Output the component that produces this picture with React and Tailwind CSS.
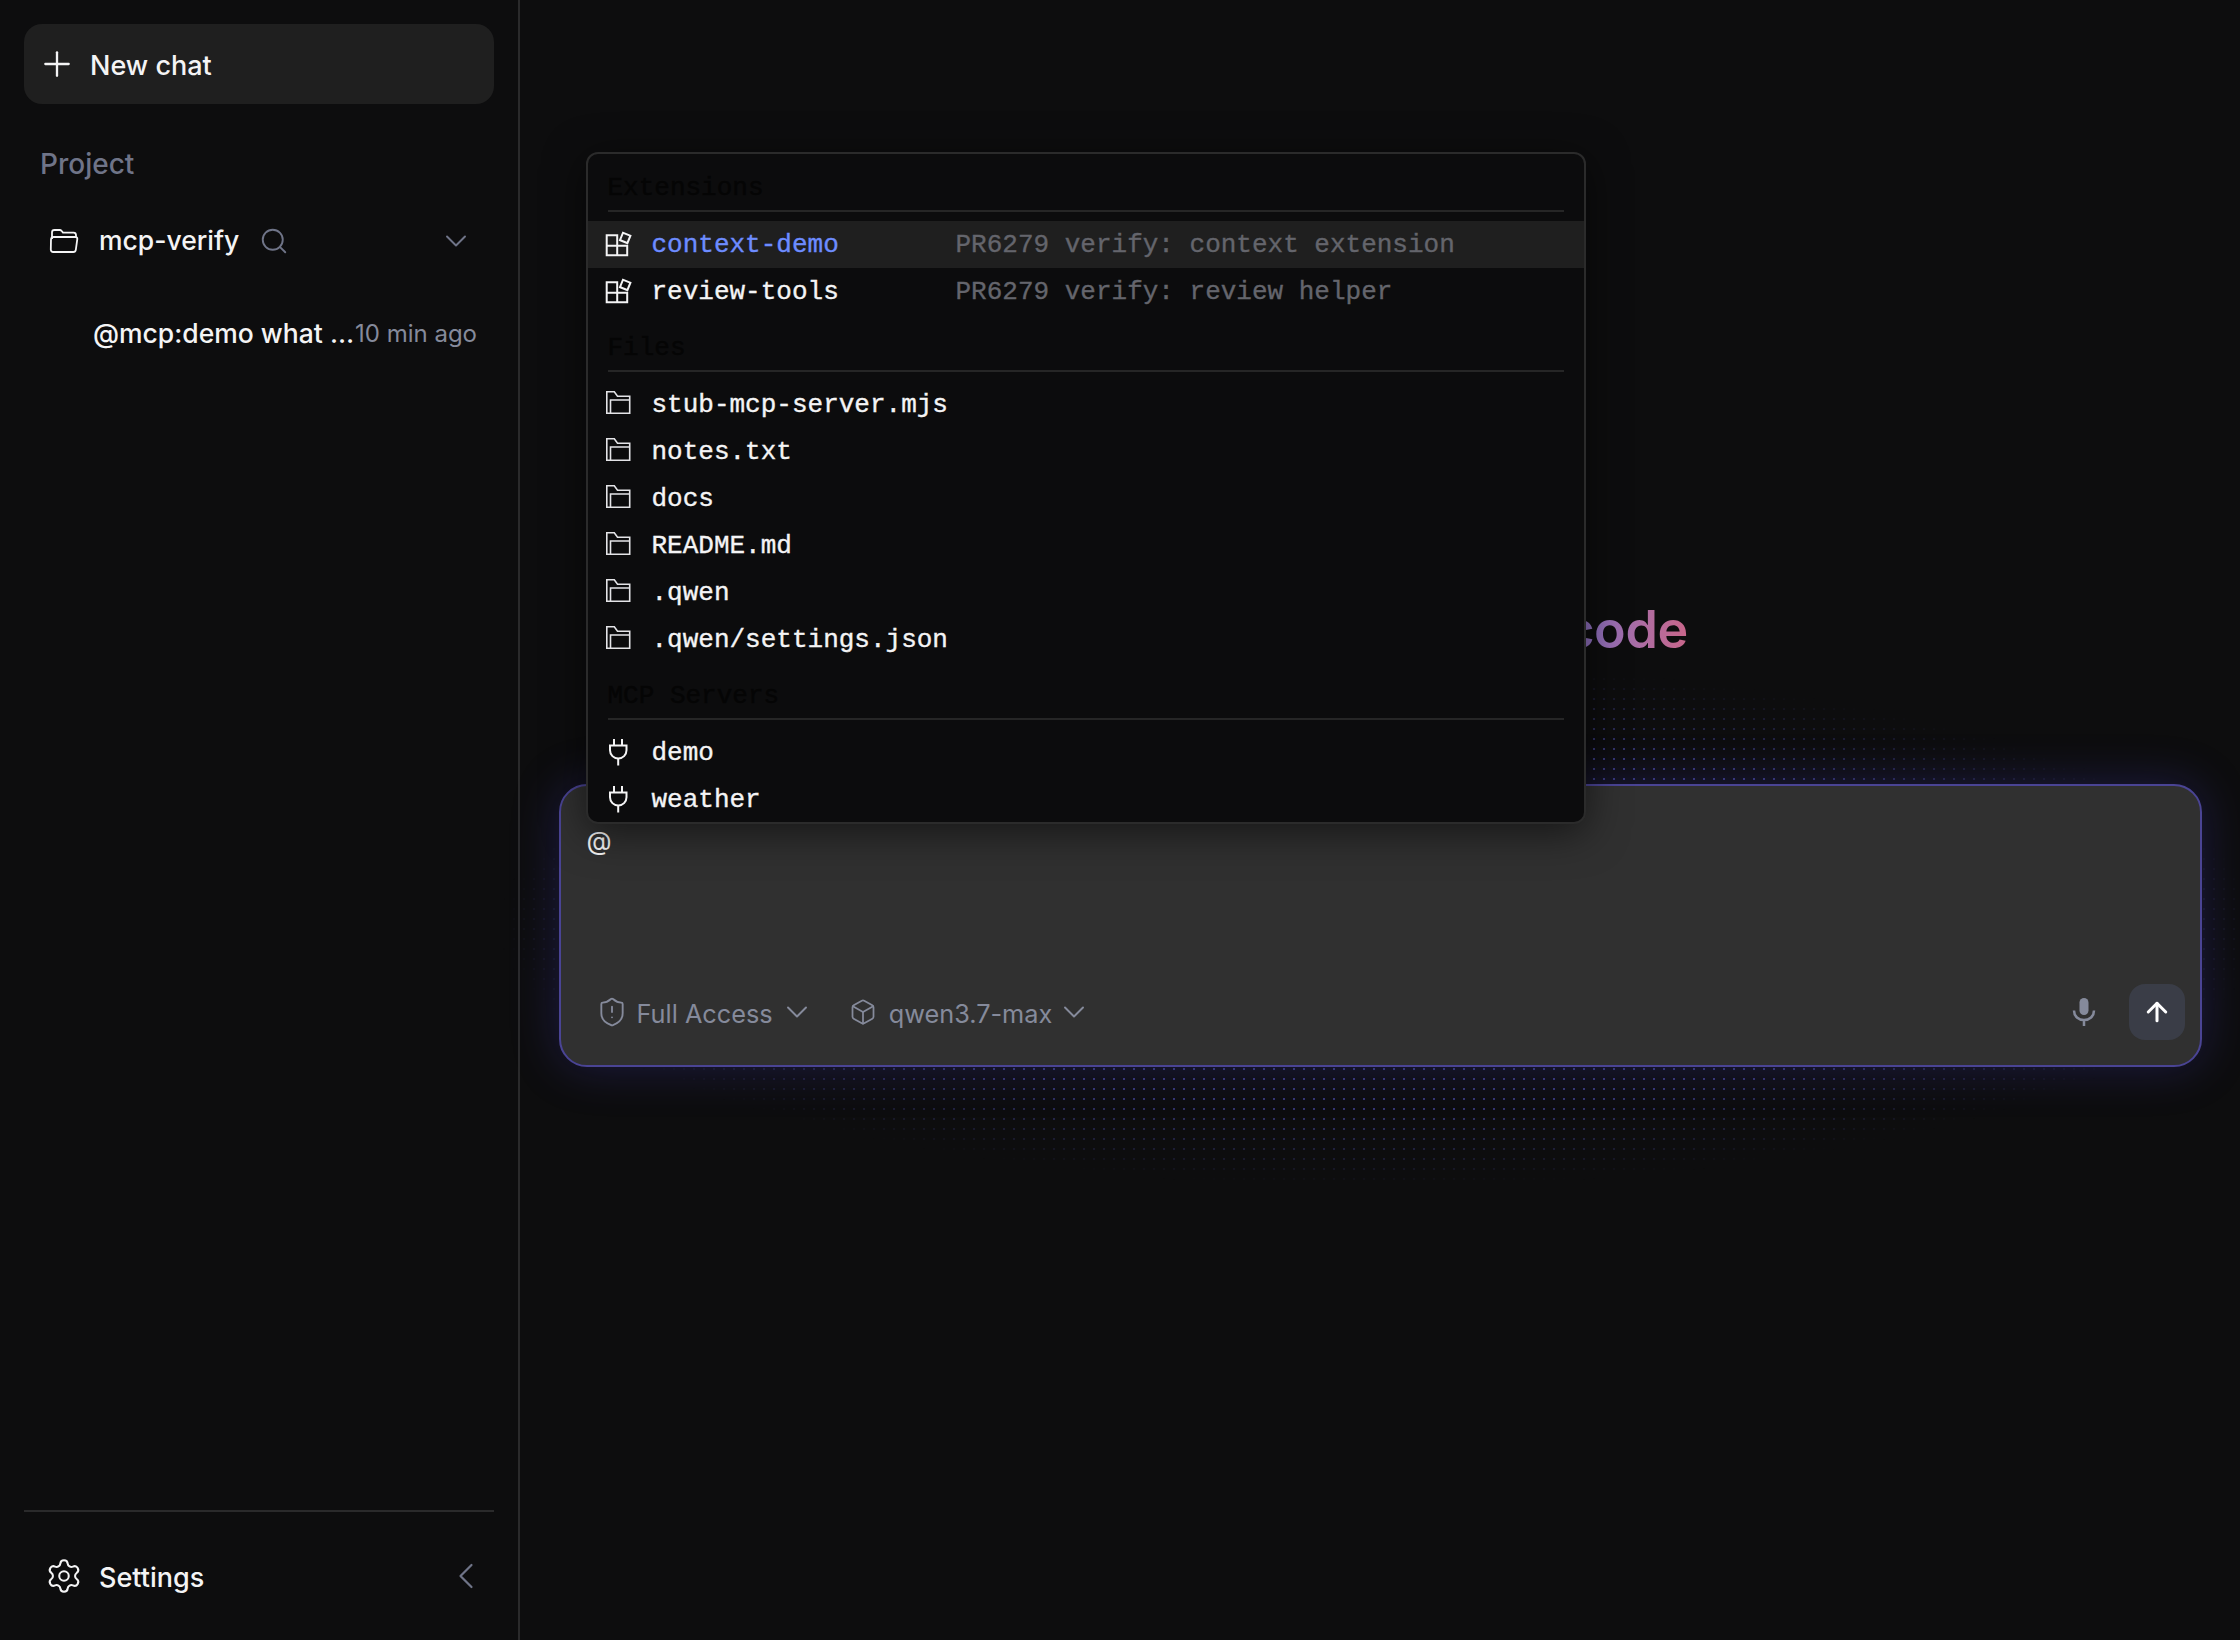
import { Plus, Search, ChevronDown, ChevronLeft, Settings, ShieldAlert, Box, ArrowUp } from "lucide-react";

const INTER = "font-['Inter',sans-serif]";

function ExtensionIcon() {
  return (
    <svg width="28" height="28" viewBox="0 0 28 28" fill="none" stroke="#f4f4f5" strokeWidth="2" className="shrink-0">
      <path d="M2.7 4.2h10.5v20H2.7zM2.7 14.7h20.5v9.5H13.2" />
      <rect x="17.2" y="2.9" width="8" height="8" transform="rotate(22 21.2 6.9)" />
    </svg>
  );
}

function FileIcon() {
  return (
    <svg width="28" height="28" viewBox="0 0 28 28" fill="none" stroke="#e4e4e7" strokeWidth="1.6" className="shrink-0">
      <path d="M2.8.8h7.5l3.2 4.4h12.2v17H2.8zM6.5 22.2V9h19" />
    </svg>
  );
}

function PlugIcon() {
  return (
    <svg width="28" height="28" viewBox="0 0 28 28" fill="none" stroke="#f4f4f5" strokeWidth="2" className="shrink-0">
      <path d="M10 0v6M18 0v6M14.200 20v6.500" />
      <path d="M6 6.500h16.500v4.800a8.200 8.200 0 0 1-16.500 0z" />
    </svg>
  );
}

function MicIcon() {
  return (
    <svg width="24" height="30" viewBox="0 0 24 30" fill="none" className="shrink-0">
      <rect x="7.500" y="1" width="9" height="17" rx="4.500" fill="#858a9b" />
      <path d="M2 13.500c0 6 4.500 9.500 10 9.500s10-3.500 10-9.500M12 23v6" stroke="#858a9b" strokeWidth="2.500" />
    </svg>
  );
}

function OpenFolderIcon() {
  return (
    <svg width="30" height="26" viewBox="0 0 30 26" fill="none" stroke="#f4f4f5" strokeWidth="1.800" strokeLinejoin="round" className="shrink-0">
      <path d="M3 11V4.500A2.500 2.500 0 0 1 5.500 2h5.200c.8 0 1.500.4 2 1l1.300 1.600h10.500c1.400 0 2.500 1.100 2.500 2.500V9" />
      <path d="M4.500 9h22c1.200 0 2 1 1.800 2.200l-1.500 10.600c-.2 1.200-1.200 2.200-2.500 2.200H4.200c-1.300 0-2.300-1-2.400-2.300L2 11.300C2.200 10 3.200 9 4.500 9z" />
    </svg>
  );
}

function SectionHeading({ children }) {
  return (
    <div className="mx-[20px] mb-[9px] border-b-2 border-[#262626] pb-[4px] pt-[4px] text-[26px] leading-[35px] text-[#050505]">
      {children}
    </div>
  );
}

function MenuRow({ icon, label, hint, active }) {
  return (
    <div className={"flex h-[47px] items-center pl-[16px] " + (active ? "bg-[#1f1f1f]" : "")}>
      {icon}
      <span className={"ml-[20px] w-[304px] shrink-0 pt-[2px] text-[26px] " + (active ? "text-[#6d8cff]" : "text-[#f4f4f5]")}>{label}</span>
      {hint && <span className="pt-[2px] text-[26px] text-[#64656c]">{hint}</span>}
    </div>
  );
}

const files = ["stub-mcp-server.mjs", "notes.txt", "docs", "README.md", ".qwen", ".qwen/settings.json"];

function MentionMenu() {
  return (
    <div className="absolute bottom-[243px] left-[27px] z-20 h-[672px] w-[1000px] overflow-hidden rounded-[12px] border-2 border-[#2b2b2b] bg-[#0c0c0d] pt-[13px] font-['Liberation_Mono',monospace] [-webkit-text-stroke:0.35px] shadow-[0_8px_40px_rgba(0,0,0,0.55)]">
      <SectionHeading>Extensions</SectionHeading>
      <MenuRow active icon={<ExtensionIcon />} label="context-demo" hint="PR6279 verify: context extension" />
      <MenuRow icon={<ExtensionIcon />} label="review-tools" hint="PR6279 verify: review helper" />

      <div className="mt-[12px]">
        <SectionHeading>Files</SectionHeading>
      </div>
      {files.map((f) => (
        <MenuRow key={f} icon={<FileIcon />} label={f} />
      ))}

      <div className="mt-[12px]">
        <SectionHeading>MCP Servers</SectionHeading>
      </div>
      <MenuRow icon={<PlugIcon />} label="demo" />
      <MenuRow icon={<PlugIcon />} label="weather" />
    </div>
  );
}

function Composer() {
  return (
    <div className="relative w-[1643px]">
      {/* dotted glow behind the box */}
      <div className="pointer-events-none absolute -inset-x-[60px] -inset-y-[120px] bg-[radial-gradient(rgba(96,96,220,0.5)_1px,transparent_1.5px)] bg-[length:10px_10px] [mask-image:radial-gradient(ellipse_closest-side,black_70%,transparent_100%)]" />
      <MentionMenu />
      <div className="relative flex h-[283px] flex-col justify-between rounded-[28px] border-2 border-[#4a4494] bg-[#303030] shadow-[0_0_48px_rgba(72,64,200,0.28)]">
        <div className="pl-[26px] pt-[36px] text-[26px] leading-[38px] text-[#f4f4f5]">@</div>
        <div className="mb-[25px] flex items-center pl-[35px] pr-[15px] text-[25.3px] text-[#858a9b]">
          <ShieldAlert size={32} strokeWidth={1.4} />
          <span className="ml-[9px] pt-[4px]">Full Access</span>
          <ChevronDown size={36} strokeWidth={1.3} className="ml-[6px]" />
          <Box size={28} strokeWidth={1.5} className="ml-[34px]" />
          <span className="ml-[12px] pt-[4px]">qwen3.7-max</span>
          <ChevronDown size={36} strokeWidth={1.3} className="ml-[4px]" />
          <div className="ml-auto flex items-center gap-[33px]">
            <MicIcon />
            <div className="flex h-[56px] w-[56px] items-center justify-center rounded-[16px] bg-[#3a3d47] text-white">
              <ArrowUp size={30} strokeWidth={2.4} />
            </div>
          </div>
        </div>
      </div>
    </div>
  );
}

export default function App() {
  return (
    <div className={"flex h-[1640px] w-[2240px] overflow-hidden bg-[#0d0d0e] text-[#f4f4f5] " + INTER}>
      <aside className="flex w-[520px] shrink-0 flex-col border-r-2 border-[#2a2a2b] px-[24px] pt-[24px]">
        <div className="flex h-[80px] items-center gap-[13px] rounded-[18px] bg-[#1f1f1f] pl-[13px] text-[27px] font-medium">
          <Plus size={40} strokeWidth={1.4} />
          <span className="pt-[5px]">New chat</span>
        </div>

        <div className="mt-[40px] pl-[16px] text-[28px] font-medium leading-[40px] text-[#6f7488]">Project</div>

        <div className="mt-[33px] flex h-[48px] items-center pl-[25px] text-[26.5px] font-medium">
          <OpenFolderIcon />
          <span className="ml-[20px]">mcp-verify</span>
          <Search size={30} strokeWidth={1.5} className="ml-[20px] text-[#6f7488]" />
          <ChevronDown size={36} strokeWidth={1.3} className="ml-auto mr-[20px] text-[#6f7488]" />
        </div>

        <div className="mt-[45px] flex h-[48px] items-center pl-[69px] pr-[17px]">
          <span className="whitespace-nowrap text-[26.5px] font-medium">@mcp:demo what …</span>
          <span className="ml-auto whitespace-nowrap text-[24px] text-[#858a9b]">10 min ago</span>
        </div>

        <div className="mt-auto mb-[40px] border-t-2 border-[#2a2a2b]">
          <div className="mt-[40px] flex h-[48px] items-center pl-[21px] text-[27px] font-medium">
            <Settings size={38} strokeWidth={1.3} />
            <span className="ml-[16px] pt-[4px]">Settings</span>
            <ChevronLeft size={44} strokeWidth={1.2} className="ml-auto mr-[6px] text-[#6f7488]" />
          </div>
        </div>
      </aside>

      <main className="flex flex-1 flex-col items-center pt-[590px]">
        <h1 className="mb-[114px] whitespace-nowrap bg-gradient-to-r from-[#5b7cf5] via-[#8f6fbb] via-85% to-[#c9668a] bg-clip-text text-[52px] font-semibold leading-[80px] tracking-[-0.4px] text-transparent">
          Ask anything about code
        </h1>
        <Composer />
      </main>
    </div>
  );
}
